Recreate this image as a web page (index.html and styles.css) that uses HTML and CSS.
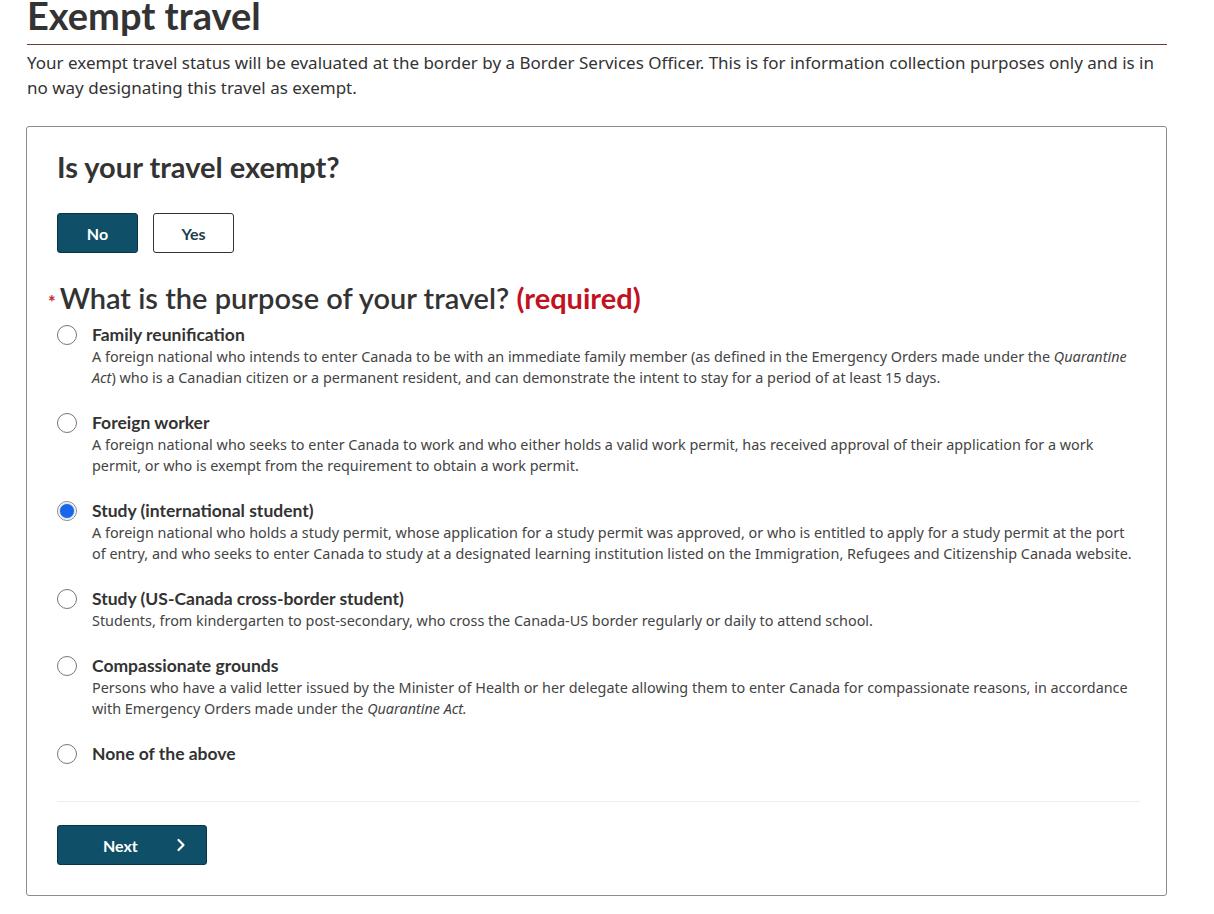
FILE: index.html
```html
<!DOCTYPE html>
<html lang="en">
<head>
<meta charset="utf-8">
<title>Exempt travel</title>
<link rel="stylesheet" href="styles.css">
</head>
<body>
<main class="page">
  <h1 class="page-title">Exempt travel</h1>
  <p class="intro">Your exempt travel status will be evaluated at the border by a Border Services Officer. This is for information collection purposes only and is in no way designating this travel as exempt.</p>

  <section class="card">
    <h2 class="card-title">Is your travel exempt?</h2>
    <div class="toggle">
      <button class="btn btn-primary btn-toggle">No</button>
      <button class="btn btn-outline btn-toggle">Yes</button>
    </div>

    <fieldset class="purpose">
      <legend class="purpose-legend"><span class="req-star">*</span>What is the purpose of your travel? <strong class="req-text">(required)</strong></legend>

      <label class="option">
        <span class="radio"></span>
        <span class="option-body">
          <span class="option-label">Family reunification</span>
          <span class="option-desc">A foreign national who intends to enter Canada to be with an immediate family member (as defined in the Emergency Orders made under the <em>Quarantine Act</em>) who is a Canadian citizen or a permanent resident, and can demonstrate the intent to stay for a period of at least 15 days.</span>
        </span>
      </label>

      <label class="option">
        <span class="radio"></span>
        <span class="option-body">
          <span class="option-label">Foreign worker</span>
          <span class="option-desc">A foreign national who seeks to enter Canada to work and who either holds a valid work permit, has received approval of their application for a work permit, or who is exempt from the requirement to obtain a work permit.</span>
        </span>
      </label>

      <label class="option">
        <span class="radio radio-checked"></span>
        <span class="option-body">
          <span class="option-label">Study (international student)</span>
          <span class="option-desc">A foreign national who holds a study permit, whose application for a study permit was approved, or who is entitled to apply for a study permit at the port of entry, and who seeks to enter Canada to study at a designated learning institution listed on the Immigration, Refugees and Citizenship Canada website.</span>
        </span>
      </label>

      <label class="option">
        <span class="radio"></span>
        <span class="option-body">
          <span class="option-label">Study (US-Canada cross-border student)</span>
          <span class="option-desc">Students, from kindergarten to post-secondary, who cross the Canada-US border regularly or daily to attend school.</span>
        </span>
      </label>

      <label class="option">
        <span class="radio"></span>
        <span class="option-body">
          <span class="option-label">Compassionate grounds</span>
          <span class="option-desc">Persons who have a valid letter issued by the Minister of Health or her delegate allowing them to enter Canada for compassionate reasons, in accordance with Emergency Orders made under the <em>Quarantine Act.</em></span>
        </span>
      </label>

      <label class="option">
        <span class="radio"></span>
        <span class="option-body">
          <span class="option-label">None of the above</span>
        </span>
      </label>
    </fieldset>

    <div class="card-footer">
      <button class="btn btn-primary btn-next">
        <span>Next</span>
        <svg class="chev" width="10" height="14" viewBox="0 0 10 14" aria-hidden="true"><path d="M2.5 2 L7.5 7 L2.5 12" fill="none" stroke="#fff" stroke-width="2.2" stroke-linecap="round" stroke-linejoin="round"/></svg>
      </button>
    </div>
  </section>
</main>
</body>
</html>
```

FILE: styles.css
```css
* { box-sizing: border-box; }

html, body {
  margin: 0;
  padding: 0;
  background: #fff;
}

body {
  font-family: "Noto Sans", "Open Sans", sans-serif;
  color: #333;
}

.page {
  width: 1140px;
  margin-left: 27px;
}

.page-title {
  font-family: Lato, "Noto Sans", sans-serif;
  font-weight: 700;
  font-size: 38px;
  line-height: 44px;
  color: #333;
  margin: -7px 0 0 0;
  padding-bottom: 7px;
  border-bottom: 1px solid #6e3b3b;
}

.intro {
  font-size: 17px;
  line-height: 25px;
  margin: 5px 0 26px 0;
  color: #333;
}

.card {
  border: 1px solid #8c8c8c;
  border-radius: 3px;
  padding: 22px 26px 30px 30px;
  margin-left: -1px;
}

.card-title {
  font-family: Lato, "Noto Sans", sans-serif;
  font-weight: 700;
  font-size: 29px;
  line-height: 36px;
  margin: 0 0 28px 0;
  color: #333;
}

.toggle {
  display: flex;
  gap: 15px;
}

.btn {
  font-family: Lato, "Noto Sans", sans-serif;
  font-weight: 700;
  font-size: 16px;
  border-radius: 3px;
  cursor: pointer;
}

.btn-toggle {
  width: 81px;
  height: 40px;
}

.btn-primary {
  background: #0f4f68;
  color: #fff;
  border: 1px solid #0a3547;
}

.btn-outline {
  background: #fff;
  color: #1c3d4d;
  border: 1px solid #333;
}

.purpose {
  border: 0;
  padding: 0;
  margin: 29px 0 0 0;
  min-width: 0;
}

.purpose-legend {
  font-family: Lato, "Noto Sans", sans-serif;
  font-weight: 600;
  font-size: 29px;
  line-height: 32px;
  color: #333;
  padding: 0;
  margin-left: -9px;
  margin-bottom: 6px;
}

.req-star {
  color: #c1272d;
  font-size: 18px;
  font-weight: 700;
  margin-right: 4px;
}

.req-text {
  color: #c1121f;
  font-weight: 700;
}

.option {
  display: flex;
  align-items: flex-start;
  gap: 15px;
  margin-bottom: 24px;
}

.option:last-child {
  margin-bottom: 36px;
}

.radio {
  flex: 0 0 20px;
  width: 20px;
  height: 20px;
  margin-top: 1px;
  border: 1px solid #777;
  border-radius: 50%;
  background: #fff;
  display: flex;
  align-items: center;
  justify-content: center;
}

.radio-checked {
  border-color: #8a8a8a;
}

.radio-checked::after {
  content: "";
  width: 14px;
  height: 14px;
  border-radius: 50%;
  background: #1a66e8;
  box-shadow: 0 0 0 1px #cfe0fb;
}

.option-body {
  display: flex;
  flex-direction: column;
}

.option-label {
  font-family: Lato, "Noto Sans", sans-serif;
  font-weight: 700;
  font-size: 17.5px;
  line-height: 22px;
  color: #333;
}

.option-desc {
  font-size: 14.4px;
  line-height: 21px;
  color: #444;
}

.option-desc em {
  font-style: italic;
}

.card-footer {
  border-top: 1px solid #eeeeee;
  padding-top: 23px;
  margin-right: 0;
}

.btn-next {
  width: 150px;
  height: 40px;
  display: flex;
  align-items: center;
  justify-content: space-between;
  padding: 0 20px 0 45px;
  font-size: 16px;
}
```
